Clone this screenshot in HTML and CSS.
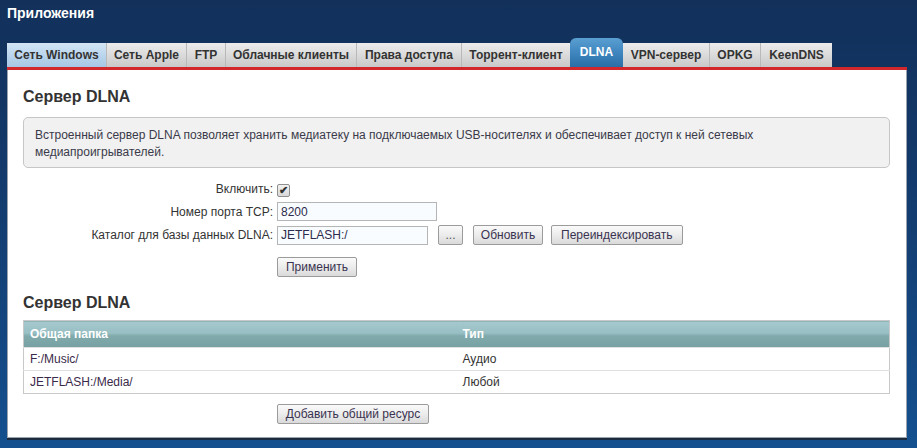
FILE: index.html
```html
<!DOCTYPE html>
<html lang="ru">
<head>
<meta charset="utf-8">
<title>Приложения</title>
<link rel="stylesheet" href="styles.css">
</head>
<body>
<div class="page">
  <h1 class="title">Приложения</h1>
  <div class="frame">
    <nav class="tabs">
      <div class="tab tab-hover" style="width:99px">Сеть Windows</div>
      <div class="tab" style="width:80px">Сеть Apple</div>
      <div class="tab" style="width:39px">FTP</div>
      <div class="tab" style="width:131px">Облачные клиенты</div>
      <div class="tab" style="width:105px">Права доступа</div>
      <div class="tab" style="width:109px">Торрент-клиент</div>
      <div class="tab tab-active" style="width:53px">DLNA</div>
      <div class="tab" style="width:86px">VPN-сервер</div>
      <div class="tab" style="width:51px">OPKG</div>
      <div class="tab" style="width:72px">KeenDNS</div>
    </nav>
    <main class="panel">
      <h2 class="heading">Сервер DLNA</h2>
      <div class="info">Встроенный сервер DLNA позволяет хранить медиатеку на подключаемых USB-носителях и обеспечивает доступ к ней сетевых медиапроигрывателей.</div>
      <div class="form">
        <div class="label">Включить:</div>
        <div class="field"><span class="check">&#10004;</span></div>
        <div class="label">Номер порта TCP:</div>
        <div class="field"><input class="input input-port" type="text" value="8200"></div>
        <div class="label">Каталог для базы данных DLNA:</div>
        <div class="field">
          <input class="input input-dir" type="text" value="JETFLASH:/">
          <button class="btn btn-dots">...</button>
          <button class="btn btn-refresh">Обновить</button>
          <button class="btn">Переиндексировать</button>
        </div>
        <div></div>
        <div class="field apply"><button class="btn btn-apply">Применить</button></div>
      </div>
      <h2 class="heading heading-2">Сервер DLNA</h2>
      <table class="shares">
        <thead>
          <tr><th>Общая папка</th><th>Тип</th></tr>
        </thead>
        <tbody>
          <tr><td>F:/Music/</td><td>Аудио</td></tr>
          <tr><td>JETFLASH:/Media/</td><td>Любой</td></tr>
        </tbody>
      </table>
      <div class="add-row"><button class="btn btn-add">Добавить общий ресурс</button></div>
    </main>
  </div>
</div>
</body>
</html>
```

FILE: styles.css
```css
html, body {
  margin: 0;
  padding: 0;
  height: 100%;
}
body {
  background: linear-gradient(to bottom, #12305a 0%, #133a6c 40%, #14508f 100%);
  font-family: "Liberation Sans", Arial, sans-serif;
  font-size: 12px;
  color: #333;
  overflow: hidden;
}
.page {
  padding: 5px 0 0 7px;
}
.title {
  margin: 0;
  font-size: 14px;
  line-height: 16px;
  font-weight: bold;
  color: #fff;
}
.frame {
  width: 900px;
  margin-top: 17px;
}
.tabs {
  display: flex;
  align-items: flex-end;
  height: 29px;
  border-bottom: 3px solid #d3282b;
}
.tab {
  box-sizing: border-box;
  height: 24px;
  line-height: 24px;
  text-align: center;
  font-weight: bold;
  font-size: 12px;
  color: #333;
  background: linear-gradient(to bottom, #ececec 0%, #d9d9d9 55%, #c9c9c9 100%);
  border-left: 1px solid #b9b9b9;
  white-space: nowrap;
}
.tab:first-child {
  border-left: none;
}
.tab-hover {
  background: linear-gradient(to bottom, #d4e6f5 0%, #b9d4ec 55%, #a6c6e4 100%);
}
.tab-active {
  height: 29px;
  line-height: 28px;
  color: #fff;
  border-left: none;
  border-radius: 6px 6px 0 0;
  background: linear-gradient(to bottom, #5a9fd1 0%, #3f86bf 50%, #2b6ea6 100%);
}
.tab-active + .tab {
  border-left: none;
}
.panel {
  background: #fff;
  border: 1px solid #9aa3ad;
  border-top: none;
  padding: 17px 16px 14px 15px;
  box-shadow: 0 2px 0 #1b2a3c;
  height: 336px;
}
.heading {
  margin: 0;
  font-size: 16px;
  line-height: 20px;
  font-weight: bold;
  color: #333;
}
.heading-2 {
  margin-top: 16px;
}
.info {
  margin-top: 10px;
  box-sizing: border-box;
  height: 51px;
  background: #f1f1f1;
  border: 1px solid #c6c6c6;
  border-radius: 5px;
  padding: 9px 11px 0 11px;
  line-height: 17px;
  color: #3a3a4a;
}
.form {
  display: grid;
  grid-template-columns: 250px 1fr;
  column-gap: 4px;
  row-gap: 4px;
  margin-top: 12px;
  align-items: center;
}
.label {
  text-align: right;
  line-height: 18px;
}
.field {
  display: flex;
  align-items: center;
  min-height: 18px;
}
.check {
  box-sizing: border-box;
  width: 13px;
  height: 13px;
  border: 1px solid #8f8f8f;
  border-radius: 2px;
  background: linear-gradient(to bottom, #f2f2f2, #d8d8d8);
  font-size: 11px;
  font-weight: bold;
  line-height: 11px;
  text-align: center;
  color: #333;
  margin-top: 2px;
  overflow: hidden;
}
.input {
  box-sizing: border-box;
  height: 19px;
  border: 1px solid #b5b5b5;
  background: #f9fcff;
  font-family: "Liberation Sans", Arial, sans-serif;
  font-size: 12px;
  color: #2c2c4c;
  padding: 0 3px;
  margin: 0;
  outline: none;
}
.input-port {
  width: 160px;
}
.input-dir {
  width: 151px;
  margin-right: 10px;
}
.btn {
  box-sizing: border-box;
  height: 20px;
  padding: 0 9px;
  margin: 0;
  border: 1px solid #9b9b9b;
  border-radius: 2px;
  background: linear-gradient(to bottom, #fafafa 0%, #ececec 50%, #dadada 100%);
  font-family: "Liberation Sans", Arial, sans-serif;
  font-size: 12px;
  color: #3a3350;
  line-height: 18px;
}
.btn-dots {
  width: 25px;
  padding: 0;
  margin-right: 10px;
  color: #555;
}
.btn-refresh {
  width: 70px;
  padding: 0;
  margin-right: 8px;
}
.apply {
  margin-top: 8px;
}
.btn-apply {
  width: 80px;
  padding: 0;
}
.shares {
  margin-top: 7px;
  width: 100%;
  border-collapse: collapse;
  border: 1px solid #c8c8c8;
}
.shares th {
  width: 50%;
  height: 26px;
  padding: 0 6px;
  text-align: left;
  font-weight: bold;
  color: #fff;
  background: linear-gradient(to bottom, #a5c9ce 0%, #98bfc3 45%, #81aaad 55%, #76a0a2 100%);
  border: none;
}
.shares td {
  height: 22px;
  padding: 0 6px;
  border-top: 1px solid #e0e0e0;
  color: #333;
}
.shares td:first-child {
  color: #3a2a4a;
}
.add-row {
  padding-left: 254px;
  margin-top: 10px;
}
.btn-add {
  width: 152px;
  padding: 0;
}
```
